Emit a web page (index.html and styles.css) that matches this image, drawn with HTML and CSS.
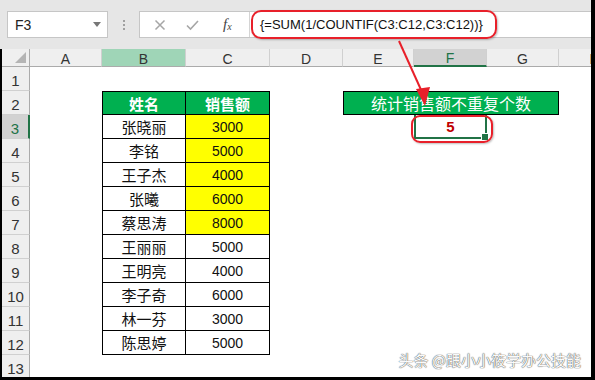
FILE: index.html
```html
<!DOCTYPE html>
<html lang="zh">
<head>
<meta charset="utf-8">
<link rel="stylesheet" href="styles.css">
</head>
<body>
<div class="app">
  <div class="toolbar">
    <div class="namebox"><span class="ref">F3</span><span class="caret"></span></div>
    <div class="dots"><span></span><span></span><span></span></div>
    <div class="fxbar">
      <div class="fxicons">
        <svg class="ico" width="12" height="12" viewBox="0 0 12 12"><path d="M1.5 1.5 L10.5 10.5 M10.5 1.5 L1.5 10.5" stroke="#a6a6a6" stroke-width="1.5" fill="none"/></svg>
        <svg class="ico" width="13" height="12" viewBox="0 0 13 12"><path d="M1 6.5 L4.5 10 L12 2" stroke="#a6a6a6" stroke-width="1.6" fill="none"/></svg>
        <span class="fx">f<sub>x</sub></span>
      </div>
      <div class="formula">{=SUM(1/COUNTIF(C3:C12,C3:C12))}</div>
    </div>
  </div>
  <div class="sheet">
    <div class="ch corner"><span class="tri"></span></div>
    <div class="ch">A</div>
    <div class="ch selcol">B</div>
    <div class="ch">C</div>
    <div class="ch">D</div>
    <div class="ch">E</div>
    <div class="ch activecol">F</div>
    <div class="ch">G</div>
    <div class="ch">H</div>

    <div class="rh">1</div>

    <div class="rh">2</div>
    <div class="t cb top head">姓名</div>
    <div class="t cc top head">销售额</div>
    <div class="summary">统计销售额不重复个数</div>

    <div class="rh activerow">3</div>
    <div class="t cb">张晓丽</div>
    <div class="t cc num yel">3000</div>
    <div class="active">5</div>

    <div class="rh">4</div>
    <div class="t cb">李铭</div>
    <div class="t cc num yel">5000</div>

    <div class="rh">5</div>
    <div class="t cb">王子杰</div>
    <div class="t cc num yel">4000</div>

    <div class="rh">6</div>
    <div class="t cb">张曦</div>
    <div class="t cc num yel">6000</div>

    <div class="rh">7</div>
    <div class="t cb">蔡思涛</div>
    <div class="t cc num yel">8000</div>

    <div class="rh">8</div>
    <div class="t cb">王丽丽</div>
    <div class="t cc num">5000</div>

    <div class="rh">9</div>
    <div class="t cb">王明亮</div>
    <div class="t cc num">4000</div>

    <div class="rh">10</div>
    <div class="t cb">李子奇</div>
    <div class="t cc num">6000</div>

    <div class="rh">11</div>
    <div class="t cb">林一芬</div>
    <div class="t cc num">3000</div>

    <div class="rh">12</div>
    <div class="t cb">陈思婷</div>
    <div class="t cc num">5000</div>

    <div class="rh">13</div>
  </div>

  <div class="ring ring-formula"></div>
  <div class="ring ring-cell"></div>
  <svg class="arrow" width="595" height="380" viewBox="0 0 595 380">
    <line x1="399" y1="41" x2="422" y2="92" stroke="#e8202a" stroke-width="2"/>
    <polygon points="416,89 430,87 425,106" fill="#e8202a"/>
  </svg>
  <div class="watermark">头条 @跟小小筱学办公技能</div>
</div>
</body>
</html>
```

FILE: styles.css
```css
* { box-sizing: border-box; }
html, body { margin: 0; padding: 0; background: #fff; }
body { font-family: "Liberation Sans", "Noto Sans CJK SC", sans-serif; }

.app {
  position: relative;
  width: 595px;
  height: 380px;
  overflow: hidden;
  border-right: 4px solid #000;
  border-bottom: 3px solid #000;
  background: #fff;
}

/* ---------- formula toolbar ---------- */
.toolbar {
  height: 49px;
  background: #e6e6e6;
  display: flex;
  align-items: flex-start;
  padding: 11px 0 0 7px;
}
.namebox {
  width: 101px;
  height: 27px;
  background: #fff;
  border: 1px solid #c6c6c6;
  display: flex;
  align-items: center;
  justify-content: space-between;
  padding: 0 6px 0 7px;
  font-size: 14px;
  color: #222;
}
.caret {
  width: 0; height: 0;
  border-left: 4px solid transparent;
  border-right: 4px solid transparent;
  border-top: 5px solid #777;
}
.dots {
  width: 31px;
  height: 27px;
  display: flex;
  flex-direction: column;
  align-items: center;
  justify-content: center;
  gap: 2px;
}
.dots span { width: 2px; height: 2px; background: #a0a0a0; }
.fxbar {
  flex: 1;
  height: 27px;
  display: flex;
  background: #fff;
  border: 1px solid #c6c6c6;
  border-right: none;
}
.fxicons {
  width: 110px;
  display: flex;
  align-items: center;
  padding-left: 14px;
  gap: 20px;
  border-right: 1px solid #d4d4d4;
}
.ico { display: block; }
.fx {
  font-family: "Liberation Serif", serif;
  font-style: italic;
  font-size: 15px;
  color: #444;
  margin-left: 4px;
}
.fx sub { font-size: 10px; vertical-align: -1px; }
.formula {
  flex: 1;
  display: flex;
  align-items: center;
  padding-left: 10px;
  font-size: 13px;
  color: #111;
  white-space: nowrap;
}

/* ---------- sheet grid ---------- */
.sheet {
  display: grid;
  grid-template-columns: 28px 72px 84px 84px 73px 71px 73px 72px 72px;
  grid-template-rows: 18px repeat(13, 24px);
  border-left: 2px solid #000;
  background: #fff;
}
.ch {
  background: #efefef;
  border-right: 1px solid #d0d0d0;
  border-bottom: 1px solid #ababab;
  font-size: 14px;
  color: #333;
  display: flex;
  align-items: center;
  justify-content: center;
  padding-top: 2px;
}
.corner { position: relative; border-right: 1px solid #ababab; }
.tri {
  position: absolute;
  right: 3px; bottom: 3px;
  width: 0; height: 0;
  border-left: 11px solid transparent;
  border-bottom: 11px solid #b4b4b4;
}
.selcol { background: #9fd5b7; }
.activecol { background: #d2d2d2; border-bottom: 2px solid #217346; color: #217346; }

.rh {
  grid-column: 1;
  background: #efefef;
  border-right: 1px solid #ababab;
  border-bottom: 1px solid #d0d0d0;
  font-size: 15px;
  color: #333;
  display: flex;
  align-items: flex-end;
  justify-content: center;
  padding-bottom: 1px;
}
.activerow { background: #d2d2d2; color: #217346; border-right: 2px solid #217346; }

.t {
  border-right: 1px solid #000;
  border-bottom: 1px solid #000;
  display: flex;
  align-items: center;
  justify-content: center;
  font-family: "Noto Sans CJK SC", sans-serif;
  font-size: 15px;
  color: #111;
  line-height: 1;
}
.cb { grid-column: 3; border-left: 1px solid #000; }
.cc { grid-column: 4; }
.top { border-top: 1px solid #000; }
.head { background: #00b050; color: #fff; font-weight: bold; }
.num { font-family: "Liberation Sans", sans-serif; font-size: 14px; }
.yel { background: #ffff00; }

.summary {
  grid-column: 6 / span 3;
  background: #00b050;
  border: 1px solid #000;
  color: #fff;
  font-family: "Noto Sans CJK SC", sans-serif;
  font-size: 16px;
  line-height: 1;
  display: flex;
  align-items: center;
  justify-content: center;
}
.active {
  grid-column: 7;
  position: relative;
  border: 2px solid #217346;
  border-top-width: 0;
  display: flex;
  align-items: center;
  justify-content: center;
  font-size: 15px;
  font-weight: bold;
  color: #c00000;
}
.active::after {
  content: "";
  position: absolute;
  right: -4px;
  bottom: -4px;
  width: 6px;
  height: 6px;
  background: #217346;
  border: 1px solid #fff;
}

/* ---------- annotations ---------- */
.ring {
  position: absolute;
  border: 2px solid #e8202a;
  box-shadow: 1px 1px 2px rgba(0,0,0,0.25);
}
.ring-formula { left: 251px; top: 10px; width: 246px; height: 29px; border-radius: 10px; }
.ring-cell { left: 411px; top: 115px; width: 82px; height: 28px; border-radius: 9px; }
.arrow { position: absolute; left: 0; top: 0; }
.watermark {
  position: absolute;
  right: 10px;
  bottom: 10px;
  font-family: "Noto Sans CJK SC", sans-serif;
  font-size: 15px;
  line-height: 1;
  color: #fafafa;
  text-shadow: 0 0 1px #444, 0 0 1px #666;
}
```
